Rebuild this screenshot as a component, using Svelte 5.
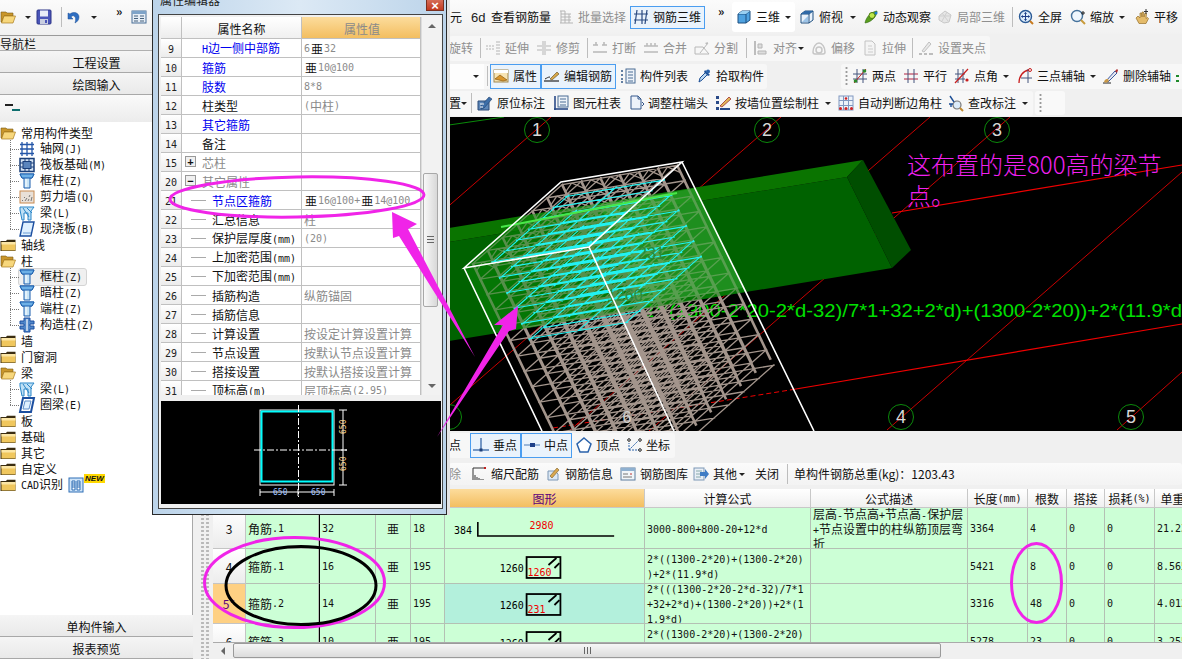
<script>
  const ICONS = {
    folderOpen: '<path d="M1 3h5l1 1h6v3H4L2 13H1z" fill="#c9962b" stroke="#7a5a14" stroke-width=".6"/><path d="M4 7h11.5l-2.5 7H1.5z" fill="#f7d77c" stroke="#a87a1e" stroke-width=".7"/>',
    folder: '<path d="M.5 4h5.5l1-1.2h8.500V14H.5z" fill="#3a2c10"/><rect x="1.500" y="5" width="14" height="8.500" fill="#f0c75e"/><rect x="1.500" y="5" width="14" height="2.500" fill="#fbe6a6"/>',
    save: '<rect x="1" y="1" width="14" height="14" rx="1" fill="#4a55b8" stroke="#2c3588"/><rect x="4" y="1.500" width="8" height="6" fill="#e8ecf8"/><rect x="4" y="10" width="8" height="5" fill="#c9cee0"/><rect x="9" y="11" width="2" height="3" fill="#4a55b8"/>',
    undo: '<path d="M4 5c4-3 9-1 9 3 0 3-2 5-4 6 1-3 1-6-1-7-1-.6-2 0-3 1l2 2H2V4z" fill="#2f6fc2" stroke="#1c4f96" stroke-width=".5"/>',
    win: '<rect x="1" y="2" width="14" height="12" fill="#e6edf5" stroke="#4a6f96"/><rect x="1" y="2" width="14" height="3" fill="#7ea3c8"/><path d="M3 7h4M3 9.500h4M3 12h4M9 7h4M9 9.500h4M9 12h4" stroke="#44607c"/>',
    view: '<text x="0" y="13" font-size="13" font-family="Liberation Sans" fill="#222">6d</text>',
    batch: '<path d="M2 2h5M2 14h13M3 2v12M3 5h10M3 8h10M3 11h10M7 2v12M11 5v9" stroke="#b5b5b5" fill="none"/>',
    rebar3d: '<path d="M1 5h14M1 11h14M4 1l-2 14M9 1v14M14 1l-2 14" stroke="#2a4a80" stroke-width="1.200" fill="none"/>',
    cube: '<path d="M2 5l4-3h8v9l-4 3H2z" fill="#4fa2e0" stroke="#1d4f80"/><path d="M2 5h8v9M10 5l4-3" stroke="#1d4f80" fill="none"/><path d="M2 5l4-3h8l-4 3z" fill="#9ad0f2"/>',
    cube2: '<path d="M2 5l4-3h8v9l-4 3H2z" fill="#e9f2fb" stroke="#1d4f80"/><path d="M2 5h8v9M10 5l4-3" stroke="#1d4f80" fill="none"/><path d="M2 5l4-3h8l-4 3z" fill="#2f6aa8"/><path d="M3 13l6-6v6z" fill="#9cc4e8"/>',
    orbit: '<path d="M2 14C3 8 8 3 14 2c0 5-5 11-12 12z" fill="#5a9e1e" stroke="#2f6a10" stroke-width=".6"/><circle cx="9" cy="6.500" r="3" fill="#bfe84a" stroke="#4a7a14"/><circle cx="13" cy="4" r="1.500" fill="#1e7ad2"/>',
    part3d: '<path d="M2 7l6-5 6 4-2 7-5 1-5-3z" fill="#e6e6e6" stroke="#c8c8c8"/><path d="M5 4l6 8M10 3l-5 9M2 7l12 0" stroke="#cfcfcf"/>',
    full: '<circle cx="7.500" cy="7.500" r="6" fill="#dcecfa" stroke="#2a5a96" stroke-width="1.400"/><path d="M12 12l3 3" stroke="#c87a1e" stroke-width="2"/><path d="M7.500 3.500v8M3.500 7.500h8" stroke="#1d3f88"/><path d="M6 5l1.500-2L9 5zM6 10l1.500 2L9 10zM5 6L3 7.500 5 9zM10 6l2 1.500L10 9z" fill="#1d3f88"/>',
    zoom: '<circle cx="7" cy="7" r="5.500" fill="#eef6fd" stroke="#45729c" stroke-width="1.400"/><path d="M11 11l4 4" stroke="#c89a3a" stroke-width="2"/><path d="M13 2v4M11 4h4" stroke="#222"/>',
    hand: '<path d="M2 9l2-2 2 2V4h1.500l.5 4V3h1.500l.5 5 1-4 1.500.5-.5 5 1.500-1 1 1-2.500 5H5z" fill="#e4bb6a" stroke="#96702a" stroke-width=".7"/><path d="M12 0v5M10 2.500h4" stroke="#333"/>',
    extend: '<path d="M1 6h8M1 9h8M12 1v14M14 1v14" stroke="#b5b5b5" stroke-dasharray="2 1" fill="none"/>',
    trim: '<path d="M7 1v14M9 1v14M1 6h5M1 10h5M10 6h5M10 10h5" stroke="#b5b5b5" fill="none"/>',
    breakI: '<path d="M1 5h5M10 5h5M1 12h14M4 2v3M12 2v3" stroke="#b8b8b8" stroke-width="1.500" fill="none"/>',
    merge: '<path d="M1 6h14M1 12h14M4 3v3M8 3v3M12 3v3" stroke="#bbb" stroke-width="1.500" fill="none"/>',
    split: '<path d="M1 14h14L9 7H1zM6 13L14 3" stroke="#b8b8b8" fill="none"/><path d="M11 3l3-1-1 3z" fill="#bbb"/>',
    align: '<path d="M2 1v14" stroke="#aaa" stroke-width="1.500"/><path d="M5 4h4v4H5zM5 11h8v3H5z" fill="#ddd" stroke="#b5b5b5"/>',
    offset: '<path d="M2 12c0-5 3-9 6-9s6 4 6 9c0 1-1 2-2 2H4c-1 0-2-1-2-2z" fill="none" stroke="#c6c6c6" stroke-width="1.500"/><circle cx="8" cy="10" r="3" fill="none" stroke="#c6c6c6" stroke-width="1.500"/>',
    stretch: '<path d="M3 1h7l3 3v11H3z" fill="#f4f4f4" stroke="#c2c2c2"/><path d="M6 6h4M6 9h5M6 12h5" stroke="#ccc"/>',
    grips: '<path d="M1 14h3M6 14h3M11 14h4" stroke="#aaa" stroke-width="1.500"/><path d="M4 11l7-9 2 2-7 8z" fill="#e8e8e8" stroke="#c0c0c0"/>',
    prop: '<rect x="1" y="2" width="14" height="12" fill="#f7e4b4" stroke="#a08850"/><rect x="1" y="2" width="14" height="3" fill="#fff"/><path d="M2 11l5-4 7 5-4 1z" fill="#d9962e" stroke="#8a5a10" stroke-width=".7"/>',
    editbar: '<path d="M0 13h15" stroke="#222" stroke-width="1.200"/><path d="M6 11l7-7 2 2-7 6z" fill="#d8a84a" stroke="#5c4a1e" stroke-width=".6"/><path d="M1 11c2-1 3-2 5-2" stroke="#222" fill="none"/>',
    list: '<path d="M1 3h2M1 7h2M1 11h2M1 14h2" stroke="#355a88" stroke-width="1.400" stroke-dasharray="1.500 0"/><rect x="6" y="1" width="9" height="14" fill="#eef3f9" stroke="#4b6c94"/><path d="M8 4h5M8 7h5M8 10h5M8 13h5" stroke="#4b6c94"/>',
    pick: '<path d="M3 14l1-4 6-6 2 2-6 6z" fill="#bcd8f0" stroke="#1d4f96"/><path d="M9 2l5 5-2 1-4-4z" fill="#1d4f96"/><circle cx="12" cy="3.500" r="2" fill="#2a62aa"/>',
    twop: '<path d="M1 6h14M1 11h14M5 1v14M11 1v14" stroke="#44557c" fill="none"/><path d="M2 15L14 1" stroke="#c02020"/><circle cx="3.500" cy="13" r="1.800" fill="#2e8a2a"/><circle cx="12.500" cy="3" r="1.800" fill="#2e8a2a"/>',
    para: '<path d="M1 6h14M1 11h14" stroke="#b02040" fill="none"/><path d="M5 1v14M11 1v14" stroke="#44557c" fill="none"/>',
    angle: '<path d="M1 6h10M1 11h10M4 1v14M9 1v14" stroke="#44557c" fill="none"/><path d="M1 15L14 1" stroke="#c81e1e" stroke-width="1.200"/><circle cx="13" cy="12" r="1.600" fill="#c81e1e"/>',
    arc: '<path d="M2 15C2 8 6 3 12 2" stroke="#c81e1e" stroke-width="1.300" fill="none"/><path d="M4 10h11M11 1v14" stroke="#44557c"/><circle cx="13" cy="2" r="1.500" fill="none" stroke="#c81e1e"/>',
    del: '<path d="M0 15h8" stroke="#222"/><path d="M3 13l9-10 2 2-9 9z" fill="#e8e8f0" stroke="#3c5aa0"/><path d="M1 14c1-3 2-3 4-3l1 2c-2 2-3 2-5 1z" fill="#c89848"/><path d="M12 3l2-2 1 1-1 3z" fill="#b03030"/>',
    mini: '<path d="M1 7h3v2H1zM1 12h3v2H1z" fill="#1f8a2a"/>',
    treeTool: '<path d="M0 4h8" stroke="#222" stroke-width="2"/><path d="M7 9h8" stroke="#0e6e6e" stroke-width="2"/>',
    mark: '<path d="M1 6h11v9H1z" fill="#5c86b8" stroke="#2a4a78"/><path d="M4 11l8-9 3 2-8 9-3 1z" fill="#3d6ea8" stroke="#1e3e6c" stroke-width=".6"/><path d="M3 9h4M3 12h3" stroke="#fff"/>',
    coltab: '<path d="M2 1v14" stroke="#2a4a88" stroke-width="1.600"/><rect x="5" y="1" width="10" height="11" fill="#eef3f9" stroke="#4b6c94"/><path d="M7 4h6M7 7h6M7 10h6" stroke="#4b6c94"/><path d="M1 14h14" stroke="#2a4a88" stroke-width="1.600"/>',
    adjust: '<path d="M3 1h7l3 3v10H3z" fill="#eef3fa" stroke="#35588c"/><path d="M10 1v3h3" fill="none" stroke="#35588c"/><path d="M14 7l2 2-2 2" stroke="#35588c" fill="none"/>',
    wall: '<rect x="1" y="1" width="3" height="3" fill="#2a4a88"/><rect x="1" y="6" width="3" height="3" fill="#2a4a88"/><rect x="1" y="12" width="3" height="3" fill="#2a4a88"/><path d="M5 14h10" stroke="#2a4a88" stroke-width="2"/><path d="M5 11l9-9 2 2-9 8z" fill="#e2b858" stroke="#a03030" stroke-width=".8"/>',
    corner: '<rect x="1" y="1" width="14" height="14" fill="#edf3fa" stroke="#8098c0"/><path d="M5.500 1v14M10.500 1v14M1 5.500h14M1 10.500h14" stroke="#8098c0"/><circle cx="8" cy="3.500" r="1.300" fill="#d02020"/><circle cx="2.500" cy="13.500" r="1.500" fill="#d02020"/><circle cx="8" cy="13.500" r="1.500" fill="#d02020"/><circle cx="13.500" cy="13.500" r="1.500" fill="#d02020"/>',
    check: '<circle cx="9" cy="10" r="4" fill="#dcecfa" stroke="#777" stroke-width="1.200"/><path d="M12 13l3 3" stroke="#c08a30" stroke-width="2"/><path d="M2 1l4 6M1 9h4M3 12v-3" stroke="#1d4f96" stroke-width="1.400" fill="none"/>',
    perp: '<path d="M0 13h16" stroke="#3566a8" stroke-width="1.300"/><path d="M8 1v12" stroke="#3566a8" stroke-width="1.300"/><rect x="6.500" y="11.500" width="3" height="3" fill="#1d3f78"/>',
    mid: '<path d="M0 8h16" stroke="#6f96c8" stroke-width="1.300"/><rect x="6" y="6" width="5" height="4" fill="#1d3f88"/>',
    vert: '<path d="M8 1l7 6-3 8H4L1 7z" fill="#fff" stroke="#2a62aa" stroke-width="1.500"/>',
    coord: '<path d="M3 13V6M3 13h10M3 13l9-9" stroke="#2a62aa" stroke-dasharray="2 1" fill="none"/><circle cx="3" cy="3" r="1.300" fill="none" stroke="#222"/><circle cx="14" cy="3" r="1.300" fill="none" stroke="#222"/><circle cx="14" cy="13" r="1.300" fill="none" stroke="#222"/>',
    scale: '<path d="M2 2v12M2 2h13M4 14V9M6 14v-3M8 14v-2M10 14v-1M12 14v-1" stroke="#333" fill="none"/><path d="M13 2l2 0" stroke="#c02020" stroke-width="2"/>',
    info: '<path d="M3 14V5h7l3 3v6z" fill="#dce8f4" stroke="#7d97b5"/><path d="M5 10l7-8 2 2-7 8z" fill="#d9a850" stroke="#7a5a20" stroke-width=".6"/>',
    lib: '<rect x="1" y="2" width="14" height="12" fill="#f1f5f9" stroke="#5d7c9e"/><rect x="1" y="2" width="14" height="3" fill="#8fb0d0"/><path d="M3 8h5M3 11h9" stroke="#777"/><path d="M10 8h2" stroke="#c03030"/>',
    other: '<rect x="1" y="2" width="10" height="12" fill="#e9eff6" stroke="#7d97b5"/><path d="M3 5h6M3 8h4M3 11h5" stroke="#8aa"/><path d="M7 6h5V3l4 5-4 5v-3H7z" fill="#3f7cc4"/>',
    grid: '<path d="M1 3.500h14M1 8h14M1 12.500h14M3 1v14M8 1v14M13 1v14" stroke="#2456a8" stroke-width="1.300"/>',
    raft: '<rect x="1" y="1.500" width="14" height="13" fill="#d5e4f4" stroke="#1a3f7a" stroke-width="1.500"/><rect x="4" y="4.500" width="8" height="7" fill="#5a85bd" stroke="#1a3f7a"/><path d="M1 6h3M1 10h3M12 6h3M12 10h3M6 1.500v3M10 1.500v3M6 11.500v3M10 11.500v3" stroke="#1a3f7a"/>',
    column: '<path d="M1 1h14l-2 4h-2v10H5V5H3z" fill="#c8e4f6" stroke="#1c5fae"/><path d="M1 1h14l-2 4H3z" fill="#6db0e6" stroke="#1c5fae"/><path d="M7 6v8" stroke="#fff"/>',
    shear: '<rect x="1" y="2" width="14" height="12" fill="#e8e0d8" stroke="#c88a50"/><path d="M3 12l1-1M6 12l2-3M9 12l1-2M12 12l1-4M5 9l1-1M10 8l1-2" stroke="#777"/>',
    beam: '<path d="M1 2h14l-3 4v9h-3V8H5v7H3L1 5z" fill="#bfe0f5" stroke="#2a86c8"/><path d="M4 3l6 9M8 3l5 5" stroke="#2a86c8"/>',
    slab: '<path d="M4 1h11l-3 14H1z" fill="#dff0ff" stroke="#1c4fa0" stroke-width="1.400"/><path d="M4 12h8" stroke="#6c9cd4"/>',
    ring: '<path d="M4 1h11l-3 14H1z" fill="#fff" stroke="#1c4fa0" stroke-width="2"/><path d="M6 4h6l-2 8H4z" fill="#dff0ff" stroke="#5c8cc8"/>',
    gzz: '<path d="M5 1h6v3h4v3h-4v2h4v3h-4v3H5v-3H1V9h4V7H1V4h4z" fill="#4f86c8" stroke="#1c4fa0"/><path d="M8 2v12" stroke="#fff" stroke-width="1.200"/>',
    book: '<rect x="1" y="1" width="14" height="14" fill="#cfe4f8" stroke="#2f6fb6"/><path d="M4 4h3v9H4zM9 4h3v9H9z" fill="#fff" stroke="#2f6fb6"/><path d="M4 6h3M4 8h3M4 10h3M9 6h3M9 8h3M9 10h3" stroke="#2f6fb6"/>'
  };

  const sp = (w) => ({ g: w });
  const sep = (w = 6) => ({ s: w });
  const drop = (w = 16) => ({ d: w });
  const it = (ic, t, w, o = {}) => ({ ic, t, w, ...o });
  const off = { off: true };
  const on = { on: true };
  const up = { up: true };

  const row1a = [it('folderOpen', '', 21), drop(14), sp(1), it('save', '', 22), sep(), sp(2), it('undo', '', 21), drop(14), sp(15), it('', '»', 15, up), it('win', '', 18), sp(301)];
  const row1b = [it('', '元', 21), it('view', '查看钢筋量', 87), it('batch', '批量选择', 72, off), it('rebar3d', '钢筋三维', 75, on), sp(13), it('', '»', 14, up)];
  const row1c = [it('cube', '三维', 48, { pad: 4 }), drop(15)];
  const row1d = [sp(4), it('cube2', '俯视', 46), drop(), sp(2), it('orbit', '动态观察', 74), it('part3d', '局部三维', 72, off), sep(), sp(3), it('full', '全屏', 52), it('zoom', '缩放', 44), drop(), sp(4), it('hand', '平移', 49)];

  const row2 = [it('', '旋转', 28, off), sep(), sp(2), it('extend', '延伸', 51, off), it('trim', '修剪', 48, off), sep(), sp(2), it('breakI', '打断', 51, off), it('merge', '合并', 51, off), it('split', '分割', 49, off), sep(), sp(4), it('align', '对齐', 44, off), drop(8), sp(6), it('offset', '偏移', 51, off), it('stretch', '拉伸', 47, off), sep(), sp(3), it('grips', '设置夹点', 72, off)];

  const row3a = [sep(), it('prop', '属性', 51, on), it('editbar', '编辑钢筋', 75, on), sp(4), it('list', '构件列表', 76), it('pick', '拾取构件', 71)];
  const row3b = [it('twop', '两点', 51), it('para', '平行', 51), it('angle', '点角', 44), drop(), sp(3), it('arc', '三点辅轴', 68), drop(), sp(2), it('del', '删除辅轴', 72), it('mini', '', 16)];

  const row4 = [it('', '置', 11), drop(8), sep(), sp(3), it('mark', '原位标注', 76), it('coltab', '图元柱表', 75), it('adjust', '调整柱端头', 87), it('wall', '按墙位置绘制柱', 105), drop(), sp(2), it('corner', '自动判断边角柱', 110), it('check', '查改标注', 69), drop()];

  const snapRow = [it('', '点', 21), it('perp', '垂点', 51, on), it('mid', '中点', 51, on), sp(4), it('vert', '顶点', 50), it('coord', '坐标', 49)];
  const tblBar = [it('', '除', 22, off), it('scale', '缩尺配筋', 74), it('info', '钢筋信息', 75), it('lib', '钢筋图库', 73), it('other', '其他', 44), drop(10), sp(8), it('', '关闭', 29), sep(), sp(4), it('', '单构件钢筋总重(kg)：1203.43', 170)];

  const tree = [
    { f: 'folderOpen', t: '常用构件类型' },
    { c: 'grid', t: '轴网(J)' },
    { c: 'raft', t: '筏板基础(M)' },
    { c: 'column', t: '框柱(Z)' },
    { c: 'shear', t: '剪力墙(Q)' },
    { c: 'beam', t: '梁(L)' },
    { c: 'slab', t: '现浇板(B)', last: true },
    { f: 'folder', t: '轴线' },
    { f: 'folderOpen', t: '柱' },
    { c: 'column', t: '框柱(Z)', sel: true },
    { c: 'column', t: '暗柱(Z)' },
    { c: 'column', t: '端柱(Z)' },
    { c: 'gzz', t: '构造柱(Z)', last: true },
    { f: 'folder', t: '墙' },
    { f: 'folder', t: '门窗洞' },
    { f: 'folderOpen', t: '梁' },
    { c: 'beam', t: '梁(L)' },
    { c: 'ring', t: '圈梁(E)', last: true },
    { f: 'folder', t: '板' },
    { f: 'folder', t: '基础' },
    { f: 'folder', t: '其它' },
    { f: 'folder', t: '自定义' },
    { f: 'folder', t: 'CAD识别', cad: true }
  ];

  const B = '亜';
  const props = [
    { n: 9, t: 'H边一侧中部筋', c: 'blue', v: ['6', B, '32'] },
    { n: 10, t: '箍筋', c: 'blue', v: [B, '10@100'] },
    { n: 11, t: '肢数', c: 'blue', v: ['8*8'] },
    { n: 12, t: '柱类型', v: ['(中柱)'] },
    { n: 13, t: '其它箍筋', c: 'blue', v: [] },
    { n: 14, t: '备注', v: [] },
    { n: 15, t: '芯柱', c: 'gray', box: '+', v: [] },
    { n: 20, t: '其它属性', c: 'gray', box: '−', v: [] },
    { n: 21, t: '节点区箍筋', c: 'blue', lv: 1, v: [B, '16@100+', B, '14@100'] },
    { n: 22, t: '汇总信息', lv: 1, v: ['柱'] },
    { n: 23, t: '保护层厚度(mm)', lv: 1, v: ['(20)'] },
    { n: 24, t: '上加密范围(mm)', lv: 1, v: [] },
    { n: 25, t: '下加密范围(mm)', lv: 1, v: [] },
    { n: 26, t: '插筋构造', lv: 1, v: ['纵筋锚固'] },
    { n: 27, t: '插筋信息', lv: 1, v: [] },
    { n: 28, t: '计算设置', lv: 1, v: ['按设定计算设置计算'] },
    { n: 29, t: '节点设置', lv: 1, v: ['按默认节点设置计算'] },
    { n: 30, t: '搭接设置', lv: 1, v: ['按默认搭接设置计算'] },
    { n: 31, t: '顶标高(m)', lv: 1, v: ['层顶标高(2.95)'] }
  ];

  const thead = ['', '', '', '', '', '图形', '计算公式', '公式描述', '长度(mm)', '根数', '搭接', '损耗(%)', '单重(kg)'];
  const rows = [
    { n: '3', h: 41, name: '角筋.1', d: '32', g: '18', kind: 'L', f: ['3000-800+800-20+12*d'], desc: ['层高-节点高+节点高-保护层', '+节点设置中的柱纵筋顶层弯', '折'], len: '3364', cnt: '4', w: '21.23' },
    { n: '4', h: 35, name: '箍筋.1', d: '16', g: '195', kind: 'box', y: 8, red: '1260', f: ['2*((1300-2*20)+(1300-2*20)', ')+2*(11.9*d)'], desc: [], len: '5421', cnt: '8', w: '8.565' },
    { n: '5*', h: 40, cur: true, name: '箍筋.2', d: '14', g: '195', kind: 'box', y: 10, red: '231', f: ['2*(((1300-2*20-2*d-32)/7*1', '+32+2*d)+(1300-2*20))+2*(1', '1.9*d)'], desc: [], len: '3316', cnt: '48', w: '4.012' },
    { n: '6', h: 35, name: '箍筋.3', d: '10', g: '195', kind: 'box', y: 8, red: '1270', f: ['2*((1300-2*20)+(1300-2*20)', ')+2*(11.9*d)'], desc: [], len: '5278', cnt: '23', w: '3.255' }
  ];

  // 3D reinforcement cage of the column, as projected segments
  const A = [464, 268], U = [97, -86], V = [125, -21], W = [78, 162];
  const P = (u, v, t) => [A[0] + U[0] * u + V[0] * v + W[0] * t, A[1] + U[1] * u + V[1] * v + W[1] * t];
  const seg = (a, b) => `M${a[0].toFixed(1)} ${a[1].toFixed(1)}L${b[0].toFixed(1)} ${b[1].toFixed(1)}`;
  let grayPath = '', cyanPath = '', zigPath = '', barPath = '';
  const N = 6;
  const STEP = 0.095;
  for (let k = 0; k <= 13; k++) {
    const t = k * STEP;
    for (let i = 0; i <= N; i++) {
      const a = 0.04 + (0.92 * i) / N;
      grayPath += seg(P(a, 0.03, t), P(a, 0.97, t)) + seg(P(0.03, a, t), P(0.97, a, t));
      if (k < 6) {
        const c = 0.12 + (0.76 * i) / N;
        cyanPath += seg(P(c, 0.1, t + 0.04), P(c, 0.9, t + 0.04));
        if (i % 3 === 0) cyanPath += seg(P(0.1, c, t + 0.04), P(0.9, c, t + 0.04));
      }
    }
  }
  for (let i = 0; i <= N; i++) {
    for (let j = 0; j <= N; j++) {
      const a = 0.04 + (0.92 * i) / N, b = 0.04 + (0.92 * j) / N;
      barPath += seg(P(a, b, 0), P(a, b, 1.2));
      if (j < N) zigPath += seg(P(a, b, 0.045), P(a, b + 0.92 / N / 2, 0)) + seg(P(a, b + 0.92 / N / 2, 0), P(a, b + 0.92 / N, 0.045));
    }
  }
  const diag = [551, 781, 930, 1010];
  const diag2 = [[887, 430, 1182, 172], [1117, 430, 1182, 372]];
  const marks = [[537, 130, '1'], [767, 130, '2'], [997, 130, '3'], [901, 417, '4'], [1131, 417, '5']];

  const runs = (s) => s.split(/([\x20-\x7e]+)/).filter(Boolean);
  const isAscii = (s) => /^[\x20-\x7e]+$/.test(s);
</script>

{#snippet tx(s)}{#each runs(s) as r}{#if isAscii(r)}<span class="lat">{r}</span>{:else}{r}{/if}{/each}{/snippet}

{#snippet icon(name)}<svg class="ico" viewBox="0 0 16 16" width="16" height="16">{@html ICONS[name]}</svg>{/snippet}

{#snippet bar(items)}
  {#each items as i}
    {#if i.g}<span class="spacer" style="width:{i.g}px"></span>
    {:else if i.s}<span class="sepcell" style="width:{i.s}px"><span class="sepline"></span></span>
    {:else if i.d}<span class="dropcell" style="width:{i.d}px"><span class="caret"></span></span>
    {:else}
      <span class="tool" class:off={i.off} class:on={i.on} class:up={i.up} style="width:{i.w}px;padding-left:{i.pad ?? (i.on ? 2 : 0)}px">
        {#if i.ic}{@render icon(i.ic)}{/if}{#if i.t}<span class="lbl" class:mar={i.ic}>{i.t}</span>{/if}
      </span>
    {/if}
  {/each}
{/snippet}

{#snippet gripDots()}<span class="grip"></span>{/snippet}

{#snippet lines(list)}<div class="lines">{#each list as l}<div>{@render tx(l)}</div>{/each}</div>{/snippet}

<div class="app">
  <header class="top">
    {@render bar(row1a)}
    {@render bar(row1b)}
    <span class="island white">{@render bar(row1c)}</span>
    {@render bar(row1d)}
  </header>

  <div class="body">
    <aside class="nav">
      <div class="navhead">导航栏</div>
      <div class="navbtn">工程设置</div>
      <div class="navbtn">绘图输入</div>
      <div class="mini">{@render icon('treeTool')}</div>
      <ul class="tree">
        {#each tree as n}
          {#if n.f}
            <li class="node">
              {@render icon(n.f)}<span class="txt">{@render tx(n.t)}</span>
              {#if n.cad}
                <span class="cad">{@render icon('book')}<span class="new">NEW</span></span>
              {/if}
            </li>
          {:else}
            <li class="node child" class:last={n.last}>
              <span class="pick" class:sel={n.sel}>{@render icon(n.c)}<span class="txt">{@render tx(n.t)}</span></span>
            </li>
          {/if}
        {/each}
      </ul>
      <div class="navbtn">单构件输入</div>
      <div class="navbtn">报表预览</div>
    </aside>

    <main class="work">
      <div class="tb h28"><span class="spacer w255"></span><span class="island">{@render bar(row2)}</span></div>
      <div class="tb h28">
        <span class="spacer w255"></span>
        <span class="island">
          <span class="combo"><span class="caret"></span></span>
          {@render bar(row3a)}
        </span>
        <span class="spacer w74"></span>
        <span class="island">{@render gripDots()}{@render bar(row3b)}</span>
      </div>
      <div class="tb h26">
        <span class="spacer w255"></span>
        <span class="island">{@render bar(row4)}</span>
        <span class="spacer w2"></span>
        <span class="island blank">{@render gripDots()}</span>
      </div>

      <svg class="scene" viewBox="194 117 988 314" width="988" height="314">
        <defs>
          <clipPath id="colclip"><polygon points="464,268 561,182 682,162 814,431 542,431" /></clipPath>
        </defs>
        <rect x="194" y="117" width="988" height="314" fill="#000" />
        <path d="M449 125L504 117" stroke="#0a8a0a" />
        {#each diag as x}
          <line x1={x} y1="117" x2={x - 361} y2="431" stroke="#c80000" />
        {/each}
        {#each diag2 as l}
          <line x1={l[0]} y1={l[1]} x2={l[2]} y2={l[3]} stroke="#c80000" />
        {/each}
        <line x1="892" y1="213" x2="1182" y2="165" stroke="#f00000" stroke-width="1.200" />
        <line x1="790" y1="390" x2="1182" y2="324" stroke="#f00000" stroke-width="1.200" />
        <line x1="553" y1="428" x2="790" y2="390" stroke="#f00000" stroke-dasharray="5 3" />

        {#each marks as m}
          <circle cx={m[0]} cy={m[1]} r="12.500" fill="none" stroke="#0c8a0c" />
          <text x={m[0]} y={m[1] + 6} class="mark">{m[2]}</text>
        {/each}
        <circle cx="449" cy="417" r="12.500" fill="none" stroke="#0c8a0c" />

        <polygon points="449,242 847,177 892,268 449,341" fill="#006200" />
        <polygon points="449,228 863,160 847,177 449,242" fill="#0a7400" />
        <polygon points="847,177 863,160 911,250 892,268" fill="#004e00" />

        <text x="643" y="317" class="formula" textLength="539" lengthAdjust="spacingAndGlyphs">2*((1300-2*20-2*d-32)/7*1+32+2*d)+(1300-2*20))+2*(11.9*d</text>

        <path d={barPath} stroke="#a3958c" stroke-width="2.600" fill="none" />
        <path d={grayPath} stroke="#a3958c" stroke-width="1.300" fill="none" />
        <path d={zigPath} stroke="#a3958c" stroke-width="1.300" fill="none" />

        <g clip-path="url(#colclip)">
          <polygon points="449,228 863,160 892,268 449,341" fill="#0a8a0a" opacity=".5" />
          <polygon points="600,205 696,188 743,288 640,305" fill="#58c858" opacity=".3" />
        </g>
        <path d={cyanPath} stroke="#22f2f2" stroke-width="1.100" fill="none" />
        <path d="M501 227L677 193" stroke="#48e848" stroke-width="2" />

        <text x="607" y="301" class="ghost">1260</text>
        <text x="638" y="259" class="ghost">231</text>
        <text x="627" y="423" class="ghost2">6</text>

        <path d="M464 268L561 182L682 162L589 247ZM464 268L542 431M589 247L674 431M682 162L814 431" fill="none" stroke="#fff" stroke-width="1.600" />

        <text x="907" y="174" class="note">这布置的是800高的梁节</text>
        <text x="907" y="205" class="note">点。</text>
      </svg>

      <div class="tb h27 mt1"><span class="spacer w255"></span><span class="island">{@render bar(snapRow)}</span></div>
      <div class="tb h27 mt3 tblbar"><span class="spacer w255"></span><span class="island grow">{@render bar(tblBar)}</span></div>

      <div class="lower">
        <div class="splitter"></div>
        <div class="gridwrap">
          <div class="tbl">
            <div class="tr thead">
              {#each thead as h, i}
                <div class="td" class:cur={i === 5}>{@render tx(h)}</div>
              {/each}
            </div>
            {#each rows as r}
              <div class="tr" style="height:{r.h}px">
                <div class="td num" class:current={r.cur}>{r.n}</div>
                <div class="td left">{@render tx(r.name)}</div>
                <div class="td left blackl">{@render tx(r.d)}</div>
                <div class="td">{B}</div>
                <div class="td left">{@render tx(r.g)}</div>
                <div class="td shape" class:teal={r.cur}>
                  <svg viewBox="0 0 200 {r.h}" width="200" height={r.h}>
                    {#if r.kind === 'L'}
                      <text x="9" y="26" class="sblack">384</text>
                      <path d="M33 14V28H170" fill="none" stroke="#000" stroke-width="1.600" />
                      <text x="85" y="21" class="sred">2980</text>
                    {:else}
                      <text x="55" y={r.y + 15} class="sblack">1260</text>
                      <rect x="82" y={r.y} width="34" height="21" fill="none" stroke="#000" stroke-width="1.800" />
                      <path d="M104 {r.y + 8}L112 {r.y + 1}M110 {r.y + 11}L115 {r.y + 6}" stroke="#000" stroke-width="1.800" />
                      <text x="83" y={r.y + 19} class="sred">{r.red}</text>
                    {/if}
                  </svg>
                </div>
                <div class="td left fcell">{@render lines(r.f)}</div>
                <div class="td left fcell">{@render lines(r.desc)}</div>
                <div class="td left">{@render tx(r.len)}</div>
                <div class="td left">{@render tx(r.cnt)}</div>
                <div class="td left"><span class="lat">0</span></div>
                <div class="td left"><span class="lat">0</span></div>
                <div class="td left">{@render tx(r.w)}</div>
              </div>
            {/each}
          </div>
          <div class="hscroll">
            <span class="sbtn"><span class="tri-l"></span></span>
            <span class="thumb"><span class="ribs"></span></span>
          </div>
        </div>
      </div>
    </main>
  </div>

  <section class="dialog">
    <div class="title"><span>属性编辑器</span><span class="close">×</span></div>
    <div class="inner">
      <div class="ptable">
        <div class="prows">
          <div class="prow phead">
            <div class="pnum"></div>
            <div class="pname center">属性名称</div>
            <div class="pval pvalh">属性值</div>
          </div>
          {#each props as p}
            <div class="prow">
              <div class="pnum">{p.n}</div>
              <div class="pname" class:lv1={p.lv}>
                {#if p.box}<span class="pbox">{p.box}</span>{/if}
                {#if p.lv}<span class="dash"></span>{/if}
                <span class={p.c ?? ''}>{@render tx(p.t)}</span>
              </div>
              <div class="pval">
                {#each p.v as v}{#if v === B}<span class="bar">{v}</span>{:else}{@render tx(v)}{/if}{/each}
              </div>
            </div>
          {/each}
        </div>
        <div class="vscroll">
          <span class="tri-u"></span>
          <span class="vthumb"><span class="vribs"></span></span>
          <span class="tri-d"></span>
        </div>
      </div>
      <svg class="preview" viewBox="161 402 280 103" width="280" height="103">
        <rect x="161" y="402" width="280" height="103" fill="#000" />
        <rect x="260" y="411" width="74" height="75" fill="none" stroke="#fff" />
        <rect x="261.500" y="412.500" width="71" height="70" fill="none" stroke="#00ffff" stroke-width="2" />
        <path d="M298.500 406V498M254 451H347" stroke="#fff" stroke-dasharray="7 2 2 2" />
        <path d="M343 411V486M339 411H347M339 451H347M339 486H347M260 493H334M260 490V497M298 490V497M334 490V497" stroke="#fff" />
        <text x="346" y="435" class="dim" transform="rotate(-90 346 435)">650</text>
        <text x="346" y="472" class="dim" transform="rotate(-90 346 472)">650</text>
        <text x="273" y="496" class="dim bgblack">650</text>
        <text x="311" y="496" class="dim bgblack">650</text>
      </svg>
    </div>
  </section>

  <svg class="annot" viewBox="0 0 1182 659" width="1182" height="659">
    <ellipse cx="297" cy="197" rx="127" ry="20" transform="rotate(-1 297 197)" fill="none" stroke="#f024e8" stroke-width="3" />
    <polygon points="392,212 417,224 408,229 475,357 399,236 393,238" fill="#f024e8" />
    <polygon points="518,306 494,325 503,325 437,437 509,331 516,329" fill="#f024e8" />
    <ellipse cx="294.500" cy="582.500" rx="90" ry="45" fill="none" stroke="#f024e8" stroke-width="3" />
    <ellipse cx="301" cy="585.500" rx="75" ry="39" fill="none" stroke="#000" stroke-width="3" />
    <ellipse cx="1036.500" cy="583" rx="25" ry="39.500" fill="none" stroke="#f024e8" stroke-width="3" />
  </svg>
</div>

<style>
  :global(body) { margin: 0; }
  .app {
    position: relative; width: 1182px; height: 659px; overflow: hidden;
    background: #f0f0f0; color: #111;
    font: 12px/16px "Noto Sans CJK SC", "Liberation Sans", sans-serif;
  }
  .lat { font-family: "DejaVu Sans Mono", monospace; font-size: 10px; }
  .top { display: flex; align-items: center; height: 34px; white-space: nowrap; background: linear-gradient(#fbfbfb, #f1f1f1); }
  .body { display: flex; height: 625px; }

  .nav { width: 194px; flex: none; display: flex; flex-direction: column; box-sizing: border-box; padding-top: 1px; }
  .navhead { height: 14px; line-height: 15px; border-top: 1px solid #9a9a9a; border-bottom: 1px solid #b0b0b0; background: #eee; box-sizing: content-box; }
  .navbtn {
    height: 21px; line-height: 23px; text-align: center; border-bottom: 1px solid #a8a8a8;
    background: linear-gradient(#f5f5f5, #e9e9e9); width: 193px; flex: none;
  }
  .mini { height: 27px; display: flex; align-items: center; padding-left: 5px; background: linear-gradient(#fafafa, #ececec); flex: none; }
  .tree { list-style: none; margin: 0; padding: 3px 0 0; flex: 1; min-height: 0; background: #fff; border-right: 1px solid #a8a8a8; width: 193px; box-sizing: border-box; }
  .node { position: relative; height: 16px; display: flex; align-items: center; white-space: nowrap; }
  .node .txt { margin-left: 5px; }
  .child { padding-left: 19px; }
  .child::before { content: ""; position: absolute; left: 10px; top: 8px; width: 9px; border-top: 1px dotted #777; }
  .child::after { content: ""; position: absolute; left: 10px; top: -1px; height: 17px; border-left: 1px dotted #777; }
  .child.last::after { height: 9px; }
  .pick { display: inline-flex; align-items: center; height: 16px; padding-right: 4px; border: 1px solid transparent; border-radius: 3px; margin-left: -1px; }
  .pick.sel { background: #f0f0f0; border-color: #d4d4d4; }
  .cad { display: inline-flex; margin-left: 5px; position: relative; }
  .new { position: absolute; left: 16px; top: -3px; background: #ffd800; font: italic 700 8px/9px "Liberation Sans", sans-serif; padding: 0 1px; color: #111; }

  .work { flex: 1; min-width: 0; display: flex; flex-direction: column; }
  .tb { display: flex; align-items: center; white-space: nowrap; overflow: hidden; flex: none; }
  .h28 { height: 28px; }
  .h26 { height: 26px; }
  .h27 { height: 26px; }
  .mt1 { margin-top: 1px; }
  .mt3 { margin-top: 3px; height: 27px; }
  .tblbar { align-items: flex-end; padding-bottom: 3px; box-sizing: border-box; }
  .w255 { width: 255px; } .w74 { width: 74px; } .w2 { width: 2px; }
  .spacer { display: inline-block; flex: none; }
  .island { display: inline-flex; align-items: center; height: 25px; background: #f7f7f7; border-radius: 3px; flex: none; }
  .island.white { background: #fff; height: 30px; }
  .island.grow { flex: 1; height: 22px; background: linear-gradient(#fbfbfb, #f3f3f3); }
  .island.blank { width: 30px; height: 24px; background: #f9f9f9; }
  .tool { display: inline-flex; align-items: center; flex: none; height: 100%; box-sizing: border-box; overflow: visible; white-space: nowrap; }
  .top .tool { height: 22px; }
  .ico { flex: none; display: block; overflow: visible; }
  .mar { margin-left: 4px; }
  .off { color: #8f8f8f; }
  .on { height: 25px; background: #eaf3fc; border: 1px solid #4a9df0; }
  .top .on { height: 23px; }
  .up .lbl { transform: translateY(-6px); font-weight: 700; }
  .sepcell { display: inline-flex; justify-content: center; align-items: center; flex: none; height: 100%; }
  .sepline { width: 1px; height: 20px; background: #bdbdbd; }
  .dropcell { display: inline-flex; justify-content: center; align-items: center; flex: none; height: 100%; }
  .caret { width: 0; height: 0; border: 3px solid transparent; border-top: 3px solid #222; border-bottom: 0; display: block; }
  .combo { width: 35px; height: 25px; background: #fdfdfd; display: inline-flex; align-items: center; justify-content: flex-end; padding-right: 5px; box-sizing: border-box; flex: none; }
  .grip { width: 11px; height: 20px; flex: none; background: radial-gradient(circle, #9a9a9a 1px, transparent 1.200px) 0 0 / 11px 4px repeat-y; }

  .scene { display: block; flex: none; margin-top: 1px; }
  .mark { font: 18px "Liberation Sans", sans-serif; fill: #d8d8d8; text-anchor: middle; }
  .formula { font: 19px "Liberation Sans", sans-serif; fill: #00e000; }
  .ghost { font: 16px "Liberation Sans", sans-serif; fill: #2a8a3a; }
  .ghost2 { font: 16px "Liberation Sans", sans-serif; fill: #cfcfcf; text-anchor: middle; }
  .note { font: 24px "Noto Sans CJK SC", "Liberation Sans", sans-serif; font-weight: 300; fill: #f020f0; }

  .lower { flex: 1; min-height: 0; display: flex; margin-top: 1px; }
  .splitter { width: 19px; flex: none; background: radial-gradient(circle, #b8b8b8 1.100px, transparent 1.400px) 6px 0 / 5px 4px repeat-y, radial-gradient(circle, #b8b8b8 1.100px, transparent 1.400px) 11px 0 / 5px 4px repeat-y, #f0f0f0; background-repeat: repeat-y; }
  .gridwrap { flex: 1; min-width: 0; display: flex; flex-direction: column; }
  .tbl { height: 153px; overflow: hidden; flex: none; }
  .tr {
    display: grid; height: 40px;
    grid-template-columns: 33px 73px 57px 35px 34px 200px 166px 157px 60px 39px 38px 50px 60px;
    width: 1002px;
  }
  .td {
    display: flex; align-items: center; justify-content: center; min-width: 0; overflow: hidden; padding-top: 1px;
    box-sizing: border-box; border-right: 1px solid #b4c0b4; border-bottom: 1px solid #b4c0b4; background: #ccffd6;
  }
  .left { justify-content: flex-start; padding-left: 2px; }
  .fcell { padding-top: 0; }
  .blackl { border-left: 1.500px solid #000; }
  .num { background: linear-gradient(#fff, #ececec); border-color: #c4c4c4; }
  .num.current { background: #fed083; color: #5b007a; }
  .teal { background: #b3f0dc; }
  .shape { justify-content: flex-start; padding-top: 0; }
  .shape svg { display: block; }
  .sblack { font: 10px "DejaVu Sans Mono", monospace; fill: #000; }
  .sred { font: 10px "DejaVu Sans Mono", monospace; fill: #f00000; }
  .lines { line-height: 13px; white-space: nowrap; }
  .thead { height: 19px; }
  .thead .td { background: linear-gradient(#fff, #f0f0f0); border-color: #c8c8c8; }
  .thead .td.cur { background: linear-gradient(#fcdc9c, #f3be60); color: #5b007a; }
  .hscroll { flex: 1; display: flex; background: #f0f0f0; border-top: 1px solid #aaa; }
  .sbtn { width: 20px; flex: none; display: flex; align-items: center; justify-content: center; }
  .tri-l { width: 0; height: 0; border: 4px solid transparent; border-right: 4px solid #666; border-left: 0; }
  .thumb { width: 708px; flex: none; background: linear-gradient(#f6f6f6, #dcdcdc); border: 1px solid #9a9a9a; border-radius: 2px; box-sizing: border-box; display: flex; align-items: center; justify-content: center; margin-bottom: 1px; }
  .ribs { width: 7px; height: 7px; background: repeating-linear-gradient(90deg, #666 0 1px, transparent 1px 3px); }

  .dialog {
    position: absolute; left: 152px; top: -8px; width: 295px; height: 523px; box-sizing: border-box;
    border: 1px solid #2a2a2a; background: linear-gradient(90deg, #bcd4ea, #dce9f5 50%, #bcd4ea);
    box-shadow: 3px 0 0 #e4e4e4; display: flex; flex-direction: column;
  }
  .title { height: 21px; flex: none; padding-left: 7px; display: flex; justify-content: space-between; color: #222; line-height: 14px; }
  .close { width: 18px; height: 18px; margin-right: 2px; background: linear-gradient(#e08a78, #c23a20); color: #fff; text-align: center; font: 700 13px/24px "Liberation Sans", sans-serif; border: 1px solid #7a3020; box-sizing: border-box; }
  .inner { flex: 1; margin: 0 3px 5px 5px; border: 1px solid #444; background: #f0f0f0; padding: 2px 1px 2px 2px; display: flex; flex-direction: column; min-height: 0; }
  .ptable { display: flex; height: 378px; flex: none; background: #fff; }
  .prows { width: 260px; flex: none; overflow: hidden; }
  .prow { display: grid; grid-template-columns: 21px 120px 119px; height: 19.030px; box-sizing: border-box; }
  .prow > div { border-right: 1px solid #c0c0c0; border-bottom: 1px solid #c0c0c0; box-sizing: border-box; display: flex; align-items: center; white-space: nowrap; overflow: hidden; padding-top: 2px; }
  .phead { height: 22px; }
  .pnum { background: linear-gradient(#fff, #ececec); justify-content: center; color: #222; font: 10px "DejaVu Sans Mono", monospace; }
  .pname { padding-left: 20px; position: relative; }
  .phead .pname { background: linear-gradient(#fff, #f0f0f0); }
  .pname.center { padding-left: 0; justify-content: center; }
  .pvalh { background: linear-gradient(#fcdc9c, #f3be60); color: #5b007a; justify-content: center; }
  .pval { color: #8a8a8a; padding-left: 2px; }
  .bar { color: #111; margin: 0 1px; }
  .blue { color: #0000f0; }
  .gray { color: #8a8a8a; }
  .pname.lv1 { padding-left: 30px; }
  .dash { position: absolute; left: 9px; top: 9px; width: 15px; border-top: 1px solid #aaa; }
  .pbox { position: absolute; left: 3px; top: 3px; width: 11px; height: 11px; border: 1px solid #999; background: #f0f0f0; color: #111; font: 700 11px/10px "Liberation Sans", sans-serif; text-align: center; box-sizing: border-box; }
  .vscroll { flex: 1; position: relative; background: #f2f2f2; border-left: 1px solid #ddd; }
  .tri-u { position: absolute; left: 6px; top: 7px; width: 0; height: 0; border: 4px solid transparent; border-bottom: 4px solid #666; border-top: 0; }
  .tri-d { position: absolute; left: 6px; bottom: 7px; width: 0; height: 0; border: 4px solid transparent; border-top: 4px solid #666; border-bottom: 0; }
  .vthumb { position: absolute; left: 1px; top: 156px; width: 15px; height: 134px; background: linear-gradient(90deg, #f8f8f8, #d8d8d8); border: 1px solid #a8a8a8; border-radius: 2px; box-sizing: border-box; }
  .vribs { position: absolute; left: 3px; top: 62px; width: 7px; height: 7px; background: repeating-linear-gradient(#666 0 1px, transparent 1px 3px); }
  .preview { display: block; flex: none; margin-top: 6px; }
  .dim { font: 8px "DejaVu Sans Mono", monospace; fill: #ffd890; }
  .bgblack { fill: #9fc0ff; }
  .annot { position: absolute; left: 0; top: 0; pointer-events: none; }
</style>
